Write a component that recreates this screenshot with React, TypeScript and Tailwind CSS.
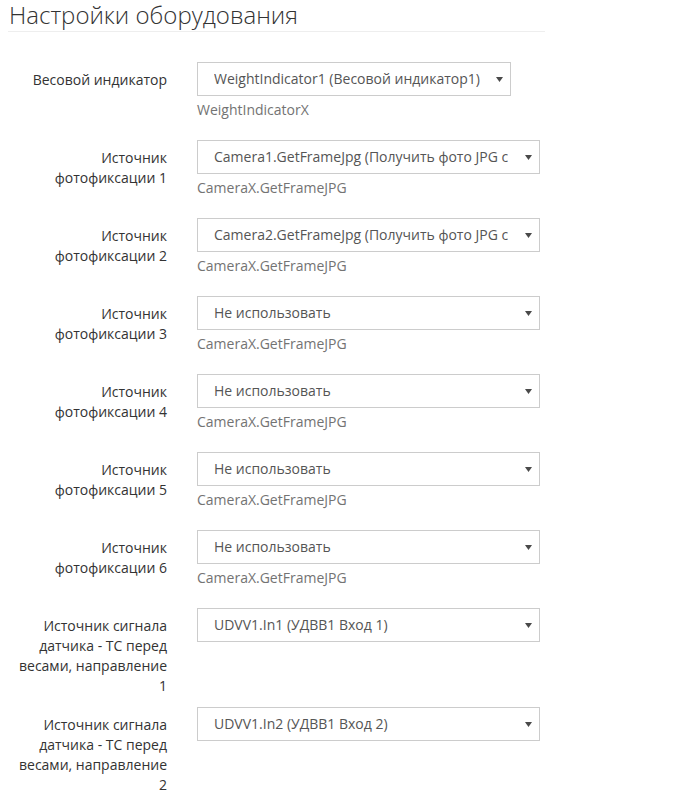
import React from "react";

type Row = {
  label: string[];
  value: string;
  help?: string;
  width: number;
  mb: number;
};

const rows: Row[] = [
  { label: ["Весовой индикатор"], value: "WeightIndicator1 (Весовой индикатор1)", help: "WeightIndicatorX", width: 314, mb: 20 },
  { label: ["Источник", "фотофиксации 1"], value: "Camera1.GetFrameJpg (Получить фото JPG с", help: "CameraX.GetFrameJPG", width: 343, mb: 20 },
  { label: ["Источник", "фотофиксации 2"], value: "Camera2.GetFrameJpg (Получить фото JPG с", help: "CameraX.GetFrameJPG", width: 343, mb: 20 },
  { label: ["Источник", "фотофиксации 3"], value: "Не использовать", help: "CameraX.GetFrameJPG", width: 343, mb: 20 },
  { label: ["Источник", "фотофиксации 4"], value: "Не использовать", help: "CameraX.GetFrameJPG", width: 343, mb: 20 },
  { label: ["Источник", "фотофиксации 5"], value: "Не использовать", help: "CameraX.GetFrameJPG", width: 343, mb: 20 },
  { label: ["Источник", "фотофиксации 6"], value: "Не использовать", help: "CameraX.GetFrameJPG", width: 343, mb: 20 },
  { label: ["Источник сигнала", "датчика - ТС перед", "весами, направление", "1"], value: "UDVV1.In1 (УДВВ1 Вход 1)", width: 343, mb: 11 },
  { label: ["Источник сигнала", "датчика - ТС перед", "весами, направление", "2"], value: "UDVV1.In2 (УДВВ1 Вход 2)", width: 343, mb: 11 },
];

function Select({ value, width }: { value: string; width: number }) {
  return (
    <div
      className="relative flex h-[34px] items-center border border-[#cccccc] bg-white pl-[16px] pr-[30px] text-[14px] leading-[20px] text-[#555555]"
      style={{ width }}
    >
      <span className="overflow-hidden whitespace-nowrap">{value}</span>
      <svg
        className="absolute right-[7px] top-[14px]"
        width="7"
        height="5"
        viewBox="0 0 7 5"
      >
        <polygon points="0,0 7,0 3.5,5" fill="#4a4a4a" />
      </svg>
    </div>
  );
}

export default function App() {
  return (
    <div
      className="min-h-[797px] w-[686px] bg-white"
      style={{ fontFamily: '"Open Sans", "Noto Sans", sans-serif' }}
    >
      <div className="ml-[8px] w-[537px] border-b border-[#eeeeee] pb-[2px]">
        <h1 className="pl-[1px] text-[24px] font-light leading-[29px] text-[#333333]">
          Настройки оборудования
        </h1>
      </div>
      <div className="mt-[30px]">
        {rows.map((r, i) => (
          <div key={i} className="flex items-start" style={{ marginBottom: r.mb }}>
            <div className="ml-[15px] w-[152px] pt-[8px] text-right text-[14px] leading-[20px] text-[#333333]">
              {r.label.map((l, j) => (
                <div key={j}>{l}</div>
              ))}
            </div>
            <div className="ml-[30px]">
              <Select value={r.value} width={r.width} />
              {r.help && (
                <div className="mt-[4px] text-[14px] leading-[20px] text-[#737373]">{r.help}</div>
              )}
            </div>
          </div>
        ))}
      </div>
    </div>
  );
}
